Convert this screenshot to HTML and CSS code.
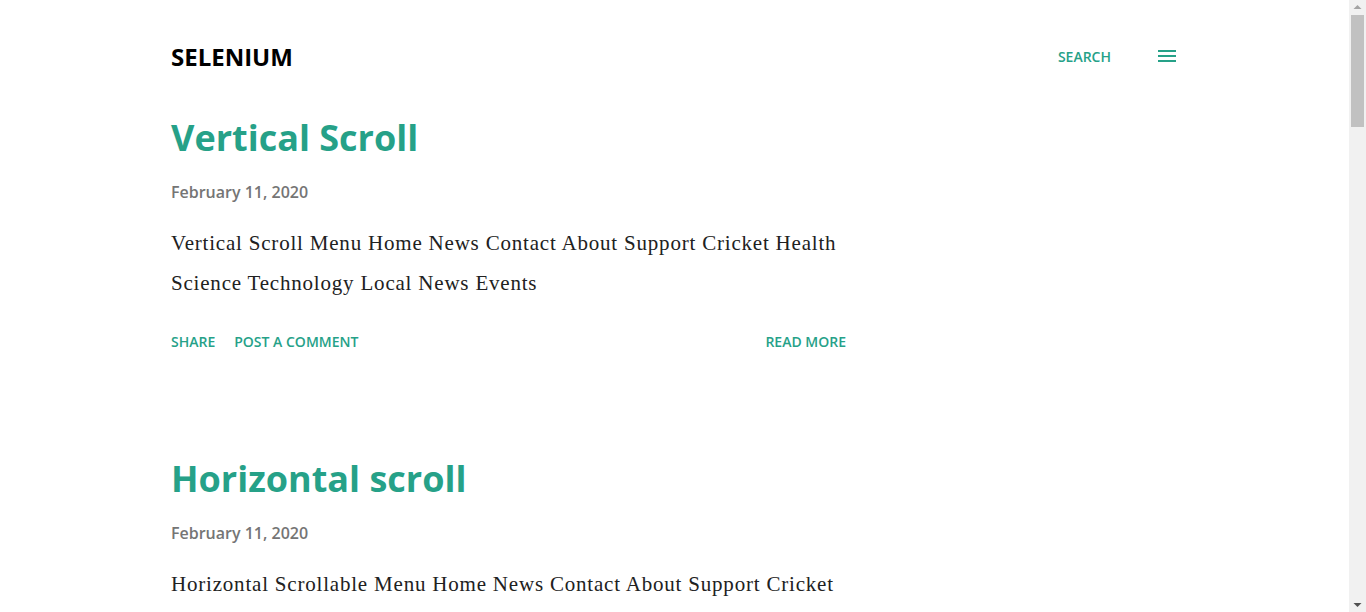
FILE: index.html
```html
<!DOCTYPE html>
<html lang="en">
<head>
<meta charset="utf-8">
<title>Selenium</title>
<link rel="stylesheet" href="styles.css">
</head>
<body>
<div class="page">
  <header class="header">
    <h1 class="blog-title">SELENIUM</h1>
    <div class="header-actions">
      <span class="search">SEARCH</span>
      <span class="menu" aria-label="Menu">
        <svg width="18" height="12" viewBox="0 0 18 12"><rect x="0" y="0" width="18" height="2" fill="#26a188"/><rect x="0" y="5" width="18" height="2" fill="#26a188"/><rect x="0" y="10" width="18" height="2" fill="#26a188"/></svg>
      </span>
    </div>
  </header>
  <main class="posts">
    <article class="post">
      <h2 class="post-title">Vertical Scroll</h2>
      <div class="post-date">February 11, 2020</div>
      <p class="post-snippet">Vertical Scroll Menu Home News Contact About Support Cricket Health Science Technology Local News Events</p>
      <div class="post-footer">
        <div class="share-links"><span>SHARE</span><span>POST A COMMENT</span></div>
        <span>READ MORE</span>
      </div>
    </article>
    <article class="post">
      <h2 class="post-title">Horizontal scroll</h2>
      <div class="post-date">February 11, 2020</div>
      <p class="post-snippet">Horizontal Scrollable Menu Home News Contact About Support Cricket Health Science Technology Local News Events</p>
      <div class="post-footer">
        <div class="share-links"><span>SHARE</span><span>POST A COMMENT</span></div>
        <span>READ MORE</span>
      </div>
    </article>
    <article class="post">
      <h2 class="post-title">Alert Popups</h2>
      <div class="post-date">February 11, 2020</div>
      <p class="post-snippet">Simple Alert Confirmation Alert Prompt Alert Click the buttons to display the alert boxes.</p>
      <div class="post-footer">
        <div class="share-links"><span>SHARE</span><span>POST A COMMENT</span></div>
        <span>READ MORE</span>
      </div>
    </article>
    <article class="post">
      <h2 class="post-title">Frames</h2>
      <div class="post-date">February 11, 2020</div>
      <p class="post-snippet">Frames page with nested frames, iframes and embedded content for practice.</p>
      <div class="post-footer">
        <div class="share-links"><span>SHARE</span><span>POST A COMMENT</span></div>
        <span>READ MORE</span>
      </div>
    </article>
    <article class="post">
      <h2 class="post-title">Drag and Drop</h2>
      <div class="post-date">February 11, 2020</div>
      <p class="post-snippet">Drag the items from the left list and drop them into the target box on the right.</p>
      <div class="post-footer">
        <div class="share-links"><span>SHARE</span><span>POST A COMMENT</span></div>
        <span>READ MORE</span>
      </div>
    </article>
    <article class="post">
      <h2 class="post-title">Web Tables</h2>
      <div class="post-date">February 11, 2020</div>
      <p class="post-snippet">Static web table and dynamic web table with rows and columns for practice.</p>
      <div class="post-footer">
        <div class="share-links"><span>SHARE</span><span>POST A COMMENT</span></div>
        <span>READ MORE</span>
      </div>
    </article>
  </main>
  <footer class="page-footer">Powered by Blogger</footer>
</div>
<div class="fake-scrollbar" aria-hidden="true">
  <svg class="sb-arrow" width="17" height="15" viewBox="0 0 17 15"><polygon points="4.5,9 12.5,9 8.5,5" fill="#a3a3a3"/></svg>
  <div class="sb-track"><div class="sb-thumb"></div></div>
  <svg class="sb-arrow" width="17" height="15" viewBox="0 0 17 15"><polygon points="4.5,6 12.5,6 8.5,10" fill="#505050"/></svg>
</div>
</body>
</html>
```

FILE: styles.css
```css
html, body {
  margin: 0;
  padding: 0;
  background: #ffffff;
}

body {
  padding-right: 17px;
}

.fake-scrollbar {
  position: fixed;
  top: 0;
  right: 0;
  width: 17px;
  height: 100vh;
  background: #f1f1f1;
  display: flex;
  flex-direction: column;
}

.sb-arrow {
  display: block;
  flex: none;
}

.sb-track {
  flex: 1;
  padding: 0 2px;
}

.sb-thumb {
  height: 112px;
  background: #c1c1c1;
}

.page {
  width: 1007px;
  margin: 0 auto;
  font-family: "Open Sans", "Liberation Sans", sans-serif;
}

.header {
  display: flex;
  align-items: center;
  justify-content: space-between;
  height: 112px;
  padding-right: 2px;
}

.blog-title {
  margin: 0;
  font-size: 24px;
  font-weight: 700;
  color: #000000;
  letter-spacing: 0;
}

.header-actions {
  display: flex;
  align-items: center;
  gap: 47px;
}

.search {
  font-size: 14px;
  font-weight: 600;
  color: #26a188;
}

.menu {
  display: flex;
  align-items: center;
}

.posts {
  width: 675px;
}

.post {
  padding-bottom: 99px;
}

.post-title {
  margin: 0;
  font-size: 36px;
  font-weight: 700;
  color: #26a188;
  line-height: 52px;
}

.post-date {
  margin-top: 16px;
  font-size: 16px;
  font-weight: 600;
  color: #757575;
  line-height: 24px;
}

.post-snippet {
  margin: 19px 0 0;
  font-family: "Liberation Serif", "DejaVu Serif", serif;
  font-size: 21px;
  letter-spacing: 0.8px;
  line-height: 40px;
  color: #212121;
}

.post-footer {
  display: flex;
  justify-content: space-between;
  margin-top: 27px;
  font-size: 14px;
  font-weight: 600;
  color: #26a188;
  line-height: 24px;
}

.share-links {
  display: flex;
  gap: 19px;
}

.page-footer {
  padding: 60px 0 200px;
  font-size: 14px;
  color: #757575;
}
```
